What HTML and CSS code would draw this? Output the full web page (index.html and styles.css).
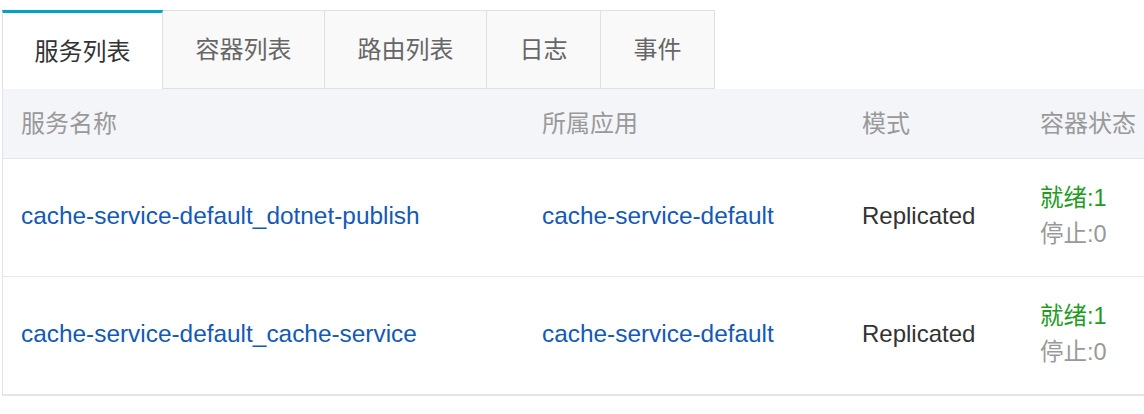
FILE: index.html
```html
<!DOCTYPE html>
<html lang="zh-CN">
<head>
<meta charset="utf-8">
<title>服务列表</title>
<link rel="stylesheet" href="styles.css">
</head>
<body>
<div class="page">
  <div class="tabs">
    <div class="tab active">服务列表</div>
    <div class="tab">容器列表</div>
    <div class="tab">路由列表</div>
    <div class="tab">日志</div>
    <div class="tab">事件</div>
  </div>
  <div class="table">
    <div class="row head">
      <div class="cell">服务名称</div>
      <div class="cell">所属应用</div>
      <div class="cell">模式</div>
      <div class="cell">容器状态</div>
    </div>
    <div class="row">
      <div class="cell"><a class="link" href="#">cache-service-default_dotnet-publish</a></div>
      <div class="cell"><a class="link" href="#">cache-service-default</a></div>
      <div class="cell mode">Replicated</div>
      <div class="cell status"><span class="ok">就绪:1</span><span class="stop">停止:0</span></div>
    </div>
    <div class="row">
      <div class="cell"><a class="link" href="#">cache-service-default_cache-service</a></div>
      <div class="cell"><a class="link" href="#">cache-service-default</a></div>
      <div class="cell mode">Replicated</div>
      <div class="cell status"><span class="ok">就绪:1</span><span class="stop">停止:0</span></div>
    </div>
  </div>
</div>
</body>
</html>
```

FILE: styles.css
```css
html, body {
  margin: 0;
  padding: 0;
  background: #fff;
  overflow: hidden;
}

body {
  font-family: "Liberation Sans", "Noto Sans CJK SC", sans-serif;
  font-size: 24px;
  color: #333;
}

.page {
  padding: 10px 0 0 2px;
  width: 1400px;
}

.tabs {
  display: flex;
  height: 79px;
  box-sizing: border-box;
}

.tab {
  display: flex;
  align-items: center;
  padding: 0 32.5px 4px;
  box-sizing: border-box;
  background: #f9f9f9;
  color: #666;
  border: 1px solid #e0e0e0;
  border-left: none;
}

.tab.active {
  background: #fff;
  color: #333;
  border-top: 3px solid #00a2ca;
  border-left: 1px solid #e0e0e0;
  border-bottom: none;
  padding: 0 31.5px 4px;
}

.table {
  border: 1px solid #e4e4e4;
  border-right: none;
  border-top: none;
  width: 1300px;
}

.row {
  display: grid;
  grid-template-columns: 521px 320px 178px 1fr;
  height: 118px;
  box-sizing: border-box;
  border-bottom: 1px solid #e6e6e6;
  align-items: center;
  padding-bottom: 3px;
}

.row.head {
  height: 70px;
  background: #f4f5f9;
  color: #999;
  padding-bottom: 4px;
}

.cell {
  padding-left: 18px;
}

.link {
  color: #1359b7;
  text-decoration: none;
  font-size: 24.4px;
}

.mode {
  color: #333;
}

.status {
  display: flex;
  flex-direction: column;
  font-size: 23.5px;
  line-height: 36px;
}

.ok {
  color: #219b22;
}

.stop {
  color: #999;
}
```
